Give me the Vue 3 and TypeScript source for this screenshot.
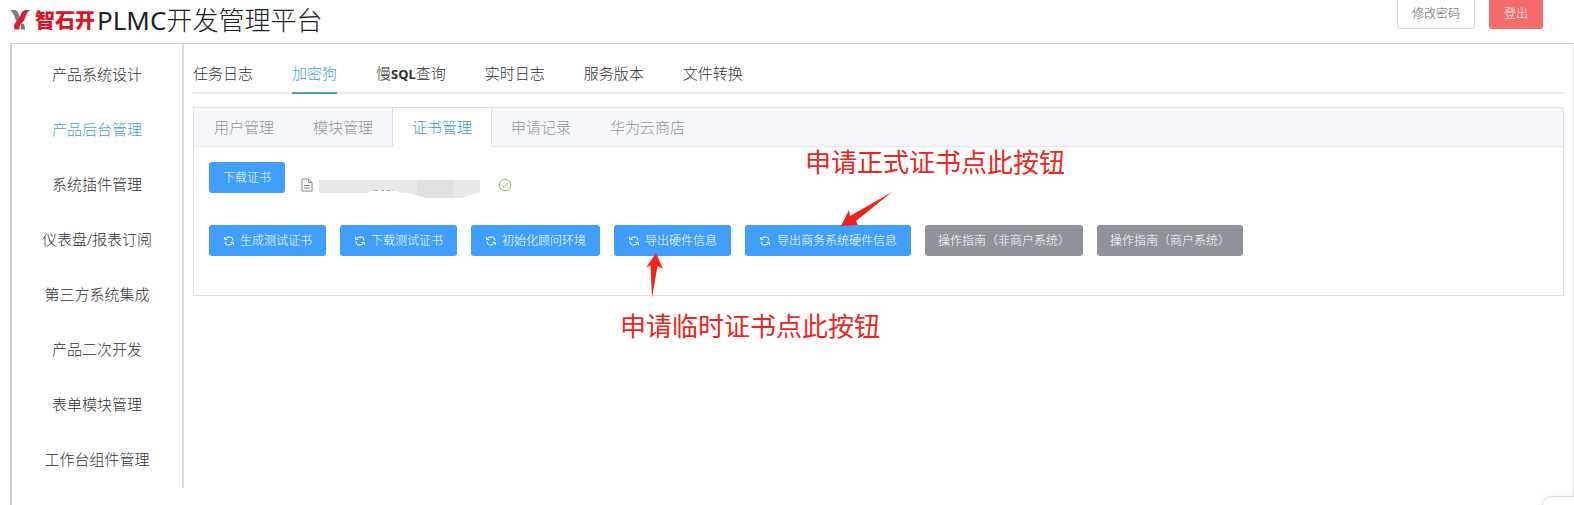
<script setup lang="ts">
import { ref } from 'vue'

interface Action {
  label: string
  kind: 'primary' | 'info'
  wide?: boolean
  note?: 'temporary' | 'formal'
}

const navItems: string[] = [
  '产品系统设计',
  '产品后台管理',
  '系统插件管理',
  '仪表盘/报表订阅',
  '第三方系统集成',
  '产品二次开发',
  '表单模块管理',
  '工作台组件管理',
]
const activeNav = ref('产品后台管理')

const mainTabs: string[] = ['任务日志', '加密狗', '慢SQL查询', '实时日志', '服务版本', '文件转换']
const activeMain = ref('加密狗')

const cardTabs: string[] = ['用户管理', '模块管理', '证书管理', '申请记录', '华为云商店']
const activeCard = ref('证书管理')

const actions: Action[] = [
  { label: '生成测试证书', kind: 'primary' },
  { label: '下载测试证书', kind: 'primary' },
  { label: '初始化顾问环境', kind: 'primary' },
  { label: '导出硬件信息', kind: 'primary', note: 'temporary' },
  { label: '导出商务系统硬件信息', kind: 'primary', wide: true, note: 'formal' },
  { label: '操作指南（非商户系统）', kind: 'info' },
  { label: '操作指南（商户系统）', kind: 'info' },
]

// Separates Latin runs so that they can be set in a heavier face.
const runs = (text: string): string[] => text.split(/([A-Z]+)/).filter(Boolean)
</script>

<template>
  <div class="page">
    <header class="header">
      <div class="brand">
        <svg class="mark" viewBox="0 0 20 20" aria-hidden="true">
          <path d="M0 0H5Q8 1 9 5L10 10L7 12Q5 9 4 5Q3 2 0 0Z" fill="#77797c" />
          <path d="M20 0H15Q12 1 10.500 5Q9 9 6 12Q3 15 4.500 19.500H9.500Q9 15 12 13Q15 10 16 5Q17 2 20 0Z" fill="#dc1f2e" />
          <path d="M11 14Q15 12 15 19.500H10.500Z" fill="#77797c" />
        </svg>
        <span class="company">智石开</span>
        <h1 class="title"><span class="product">PLMC</span>开发管理平台</h1>
      </div>
      <div class="account">
        <button type="button" class="top-btn">修改密码</button>
        <button type="button" class="top-btn danger">登出</button>
      </div>
    </header>

    <div class="frame">
      <nav class="sidebar">
        <a
          v-for="item in navItems"
          :key="item"
          href="#"
          :class="['nav-link', { active: item === activeNav }]"
          @click.prevent="activeNav = item"
        >{{ item }}</a>
      </nav>

      <main class="content">
        <div class="main-tabs" role="tablist">
          <button
            v-for="tab in mainTabs"
            :key="tab"
            type="button"
            role="tab"
            :aria-selected="tab === activeMain"
            :class="['main-tab', { active: tab === activeMain }]"
            @click="activeMain = tab"
          ><span
            v-for="run in runs(tab)"
            :key="run"
            :class="{ latin: /^[A-Z]+$/.test(run) }"
          >{{ run }}</span></button>
        </div>

        <section class="card">
          <div class="card-tabs" role="tablist">
            <button
              v-for="tab in cardTabs"
              :key="tab"
              type="button"
              role="tab"
              :aria-selected="tab === activeCard"
              :class="['card-tab', { active: tab === activeCard }]"
              @click="activeCard = tab"
            >{{ tab }}</button>
          </div>

          <div class="card-body">
            <div class="file-row">
              <button type="button" class="btn primary">下载证书</button>
              <div class="file">
                <svg class="file-icon" viewBox="0 0 12 14" fill="none" stroke="#85888e" aria-hidden="true">
                  <path d="M1 1H7.500L11 4.500V13H1ZM7.500 1V4.500H11M3 7.500H9M3 10H9" />
                </svg>
                <svg class="redacted" viewBox="0 0 161 18" aria-hidden="true">
                  <path d="M0 0H161V13Q150 14 144 18H108Q98 16 90 13H0Z" fill="#e8e8e8" />
                  <path d="M98 0H135V18H108L98 15Z" fill="#e0e0e0" />
                  <path d="M48 13Q55 9 65 10Q76 10 84 13Z" fill="#fff" />
                  <path d="M55 10.500H59M62 10.500H65M68 10.500H71M74 10.500H75" stroke="#aaa" />
                </svg>
                <svg class="check" viewBox="0 0 14 14" fill="none" stroke="#7cc35b" aria-hidden="true">
                  <circle cx="7" cy="7" r="5.800" />
                  <path d="M4 7L6.300 9.200L10.200 5" />
                </svg>
              </div>
            </div>

            <div class="actions">
              <div v-for="action in actions" :key="action.label" class="action">
                <button type="button" :class="['btn', action.kind, { wide: action.wide }]">
                  <svg
                    v-if="action.kind === 'primary'"
                    class="refresh"
                    viewBox="0 0 12 12"
                    fill="none"
                    stroke="currentColor"
                    aria-hidden="true"
                  >
                    <path d="M1.500 2V4.500H4.500M2.500 4Q3 2 6 2H7.500Q10 2.300 10 5.500M10.500 10V7.500H7.500M9.500 8Q9 10 6 10H4.500Q2 9.700 2 6.500" />
                  </svg>
                  <span>{{ action.label }}</span>
                </button>
                <template v-if="action.note === 'temporary'">
                  <svg class="arrow arrow-up" viewBox="0 0 18 48" aria-hidden="true">
                    <path d="M10 1L17 17L11.500 14L6 46L4.500 13L0 16Z" fill="#fb2015" />
                  </svg>
                  <span class="note note-below">申请临时证书点此按钮</span>
                </template>
                <template v-if="action.note === 'formal'">
                  <svg class="arrow arrow-down" viewBox="0 0 52 36" aria-hidden="true">
                    <path d="M0 35L8 19L9 25L51 1L15 30L17 34Z" fill="#f0231b" />
                  </svg>
                  <span class="note note-above">申请正式证书点此按钮</span>
                </template>
              </div>
            </div>
          </div>
        </section>
      </main>
    </div>
    <button type="button" class="float-widget" aria-label="助手"></button>
  </div>
</template>

<style>
body {
  margin: 0;
  background: #fff;
}
</style>

<style scoped>
.page {
  position: relative;
  box-sizing: border-box;
  display: flex;
  flex-direction: column;
  height: 100vh;
  min-height: 500px;
  overflow: hidden;
  font-family: "Noto Sans", "Noto Sans CJK SC", sans-serif;
  font-weight: 300;
  font-size: 15px;
  color: #303133;
}

button {
  font: inherit;
  color: inherit;
  margin: 0;
  padding: 0;
  border: 0;
  background: none;
  white-space: nowrap;
  cursor: pointer;
}

.header {
  flex: none;
  display: flex;
  justify-content: space-between;
  align-items: flex-start;
  height: 43px;
  padding: 0 31px 0 10px;
}

.brand {
  display: flex;
  align-items: center;
  height: 40px;
}

.mark {
  width: 20px;
  height: 20px;
  margin-right: 5px;
}

.company {
  font-family: "Noto Sans CJK SC", sans-serif;
  font-size: 20px;
  font-weight: 900;
  line-height: 40px;
  color: #dc1425;
}

.title {
  margin: 0 0 0 2px;
  font-size: 26px;
  font-weight: 300;
  line-height: 40px;
  color: #1f2024;
}

.product {
  font-weight: 400;
}

.account {
  display: flex;
  gap: 14px;
}

.top-btn {
  box-sizing: border-box;
  height: 29px;
  padding: 0 14px;
  border: 1px solid #dcdfe6;
  border-top: 0;
  border-radius: 0 0 3px 3px;
  font-size: 12px;
  line-height: 28px;
  color: #606266;
}

.top-btn.danger {
  border-color: #f56c6c;
  background: #f56c6c;
  color: #fff;
}

.frame {
  flex: 1;
  display: flex;
  align-items: flex-start;
  border: 1px solid #cfcfcf;
  border-left-width: 2px;
  border-right-color: #e6e6e6;
  border-bottom: 0;
  margin-left: 10px;
}

.sidebar {
  flex: none;
  box-sizing: border-box;
  width: 172px;
  padding: 3px 0 1px;
  border-right: 2px solid #dcdcdc;
}

.nav-link {
  display: block;
  line-height: 55px;
  text-align: center;
  color: #303133;
  text-decoration: none;
}

.nav-link.active {
  color: #4a9fd0;
}

.content {
  flex: 1;
  min-width: 0;
  padding: 10px 9px 0;
}

.main-tabs {
  display: flex;
  gap: 39px;
  border-bottom: 2px solid #e8eaee;
}

.main-tab {
  height: 40px;
  margin-bottom: -2px;
  border-bottom: 2px solid transparent;
  line-height: 38px;
}

.main-tab.active {
  color: #4a9fd0;
  border-bottom-color: #4ba0c0;
}

.latin {
  font-size: 13px;
  font-weight: 700;
}

.card {
  margin-top: 13px;
  border: 1px solid #e0e2e6;
}

.card-tabs {
  display: flex;
  height: 38px;
  border-bottom: 1px solid #e4e7ed;
  background: #f5f7fa;
}

.card-tab {
  box-sizing: border-box;
  height: 39px;
  padding: 0 19px;
  border: solid transparent;
  border-width: 0 1px 0 0;
  line-height: 39px;
  color: #909399;
}

.card-tab:first-child {
  padding-left: 20px;
}

.card-tab.active {
  border-color: #dcdfe6;
  background: #fff;
  color: #3c97cf;
  box-shadow: -1px 0 #dcdfe6;
}

.card-body {
  padding: 15px 15px 39px;
}

.file-row {
  display: flex;
  align-items: flex-start;
  gap: 16px;
}

.file {
  display: flex;
  align-items: flex-start;
  padding-top: 16px;
}

.file-icon {
  width: 12px;
  height: 14px;
}

.redacted {
  width: 161px;
  height: 18px;
  margin: 2px 18px 0 6px;
}

.check {
  width: 14px;
  height: 14px;
}

.actions {
  display: flex;
  gap: 14px;
  margin-top: 27px;
}

.action {
  position: relative;
}

.btn {
  display: flex;
  align-items: center;
  gap: 5px;
  height: 31px;
  padding: 0 14px;
  border-radius: 3px;
  font-size: 12px;
  line-height: 31px;
  color: #fff;
}

.btn.primary {
  background: #409eff;
}

.btn.info {
  padding: 0 13px;
  background: #909399;
}

.btn.wide {
  gap: 6px;
}

.refresh {
  width: 12px;
  height: 12px;
}

.arrow,
.note {
  position: absolute;
  pointer-events: none;
}

.arrow-up {
  left: 32px;
  top: 27px;
  width: 18px;
  height: 48px;
}

.arrow-down {
  left: 96px;
  top: -34px;
  width: 52px;
  height: 36px;
}

.note {
  font-size: 26px;
  line-height: 36px;
  font-weight: 400;
  color: #ea261d;
  white-space: nowrap;
}

.note-below {
  left: 6px;
  top: 83px;
}

.note-above {
  left: 60px;
  top: -81px;
}

.float-widget {
  position: absolute;
  right: -16px;
  bottom: -32px;
  width: 48px;
  height: 41px;
  border: 1px solid #d5def8;
  border-radius: 10px;
  background: #fff;
  box-shadow: 0 0 14px rgba(0, 0, 0, 0.06);
}
</style>
